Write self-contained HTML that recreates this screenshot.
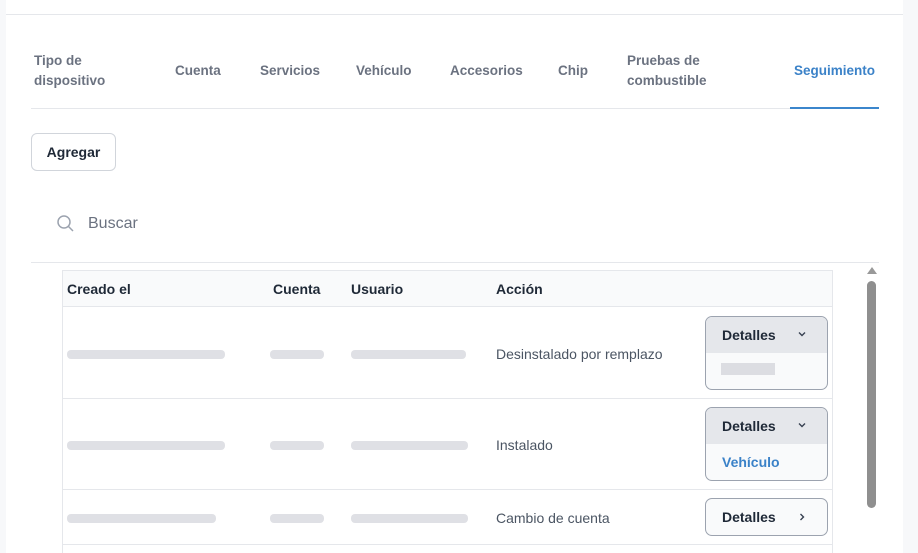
<!DOCTYPE html>
<html><head><meta charset="utf-8"><style>
*{box-sizing:border-box;margin:0;padding:0}
html,body{width:918px;height:553px;overflow:hidden}
body{background:#f7f8fa;font-family:"Liberation Sans",sans-serif;position:relative}
.a{position:absolute}
.card{left:6px;top:0;width:897px;height:553px;background:#fff}
.tab{font-size:13.5px;font-weight:bold;color:#6b7280;line-height:20px}
.hd{font-size:14px;font-weight:bold;color:#1f2937}
.tx{font-size:14px;color:#4b5563}
.blur{background:#dcdde2;height:9px;border-radius:4px;opacity:.9}
.btn{border:1px solid #9ca3af;border-radius:7px;background:#f9fafb;overflow:hidden}
.bh{height:36px;background:#e5e7eb;font-size:14px;font-weight:bold;color:#1f2937;padding:10px 0 0 16px;position:relative}
.chev{position:absolute;right:20px;top:13px}
</style></head><body>
<div class="a card"></div>
<div class="a" style="left:6px;top:14px;width:897px;height:1px;background:#e5e7eb"></div>
<div class="a tab" style="left:34px;top:51px">Tipo de<br>dispositivo</div>
<div class="a tab" style="left:175px;top:61px">Cuenta</div>
<div class="a tab" style="left:260px;top:61px">Servicios</div>
<div class="a tab" style="left:356px;top:61px">Vehículo</div>
<div class="a tab" style="left:450px;top:61px">Accesorios</div>
<div class="a tab" style="left:558px;top:61px">Chip</div>
<div class="a tab" style="left:627px;top:51px">Pruebas de<br>combustible</div>
<div class="a tab" style="left:794px;top:61px;color:#3b82c8">Seguimiento</div>
<div class="a" style="left:31px;top:108px;width:848px;height:1px;background:#e5e7eb"></div>
<div class="a" style="left:790px;top:107px;width:89px;height:2px;background:#3b86cc"></div>
<div class="a" style="left:31px;top:133px;width:85px;height:38px;border:1px solid #d1d5db;border-radius:6px;font-size:14px;font-weight:bold;color:#1f2937;text-align:center;line-height:36px">Agregar</div>
<svg class="a" style="left:56px;top:214px" width="20" height="20" viewBox="0 0 20 20"><circle cx="8" cy="8" r="6" fill="none" stroke="#9ca3af" stroke-width="1.5"/><line x1="12.5" y1="12.5" x2="17" y2="17" stroke="#9ca3af" stroke-width="1.5"/></svg>
<div class="a" style="left:88px;top:215px;font-size:16px;color:#6b7280">Buscar</div>
<div class="a" style="left:31px;top:262px;width:848px;height:1px;background:#e5e7eb"></div>
<div class="a" style="left:62px;top:270px;width:771px;height:290px;border:1px solid #e5e7eb"></div>
<div class="a" style="left:63px;top:271px;width:769px;height:36px;background:#f9fafb;border-bottom:1px solid #e5e7eb"></div>
<div class="a hd" style="left:67px;top:281px">Creado el</div>
<div class="a hd" style="left:273px;top:281px">Cuenta</div>
<div class="a hd" style="left:351px;top:281px">Usuario</div>
<div class="a hd" style="left:496px;top:281px">Acción</div>
<div class="a" style="left:63px;top:398px;width:769px;height:1px;background:#e5e7eb"></div>
<div class="a" style="left:63px;top:489px;width:769px;height:1px;background:#e5e7eb"></div>
<div class="a" style="left:63px;top:544px;width:769px;height:1px;background:#e5e7eb"></div>

<div class="a blur" style="left:67px;top:350px;width:158px"></div>
<div class="a blur" style="left:270px;top:350px;width:54px"></div>
<div class="a blur" style="left:351px;top:350px;width:115px"></div>
<div class="a tx" style="left:496px;top:346px">Desinstalado por remplazo</div>
<div class="a btn" style="left:705px;top:316px;width:123px;height:74px"><div class="bh">Detalles<svg class="chev" width="10" height="8" viewBox="0 0 10 8"><path d="M2 2.5L5 5.5L8 2.5" fill="none" stroke="#374151" stroke-width="1.4"/></svg></div><div style="margin:10px 0 0 15px;width:54px;height:12px;background:#dcdde2"></div></div>

<div class="a blur" style="left:67px;top:441px;width:158px"></div>
<div class="a blur" style="left:270px;top:441px;width:54px"></div>
<div class="a blur" style="left:351px;top:441px;width:117px"></div>
<div class="a tx" style="left:496px;top:437px">Instalado</div>
<div class="a btn" style="left:705px;top:407px;width:123px;height:74px"><div class="bh">Detalles<svg class="chev" width="10" height="8" viewBox="0 0 10 8"><path d="M2 2.5L5 5.5L8 2.5" fill="none" stroke="#374151" stroke-width="1.4"/></svg></div><div style="padding:10px 0 0 16px;font-size:14px;font-weight:bold;color:#3b82c8">Vehículo</div></div>

<div class="a blur" style="left:67px;top:514px;width:149px"></div>
<div class="a blur" style="left:270px;top:514px;width:54px"></div>
<div class="a blur" style="left:351px;top:514px;width:117px"></div>
<div class="a tx" style="left:496px;top:510px">Cambio de cuenta</div>
<div class="a btn" style="left:705px;top:498px;width:123px;height:38px"><div style="padding:10px 0 0 16px;font-size:14px;font-weight:bold;color:#1f2937;position:relative">Detalles<svg style="position:absolute;right:21px;top:13px" width="8" height="10" viewBox="0 0 8 10"><path d="M2.5 2L5.5 5L2.5 8" fill="none" stroke="#374151" stroke-width="1.4"/></svg></div></div>

<div class="a" style="left:867px;top:267px;width:0;height:0;border-left:5px solid transparent;border-right:5px solid transparent;border-bottom:7px solid #999"></div>
<div class="a" style="left:867px;top:281px;width:9px;height:227px;border-radius:5px;background:#8f8f8f"></div>
</body></html>
